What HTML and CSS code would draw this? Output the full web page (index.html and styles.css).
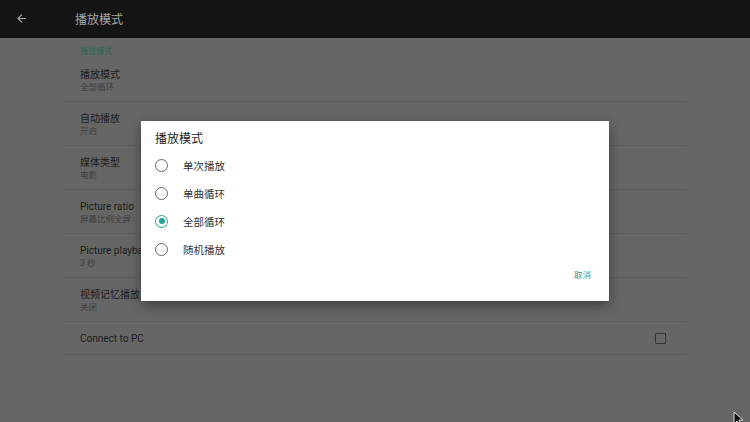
FILE: index.html
```html
<!DOCTYPE html>
<html lang="zh">
<head>
    <meta charset="UTF-8">
    <title>播放模式</title>
    <meta name="viewport" content="width=device-width, initial-scale=1.0">
    <link rel="stylesheet" href="styles.css">
</head>
<body>
    <div class="screen">
        <div class="toolbar">
            <svg class="back" width="13" height="13" viewBox="0 0 24 24">
                <path d="M20 11H7.83l5.59-5.59L12 4l-8 8 8 8 1.41-1.41L7.83 13H20v-2z" fill="#b0b0b0"/>
            </svg>
            <span class="toolbar-title">播放模式</span>
        </div>

        <div class="prefs">
            <div class="category">播放模式</div>
            <div class="pref">
                <div class="pref-title">播放模式</div>
                <div class="pref-sub">全部循环</div>
            </div>
            <div class="pref">
                <div class="pref-title">自动播放</div>
                <div class="pref-sub">开启</div>
            </div>
            <div class="pref">
                <div class="pref-title">媒体类型</div>
                <div class="pref-sub">电影</div>
            </div>
            <div class="pref">
                <div class="pref-title">Picture ratio</div>
                <div class="pref-sub">屏幕比例全屏</div>
            </div>
            <div class="pref">
                <div class="pref-title">Picture playback</div>
                <div class="pref-sub">3 秒</div>
            </div>
            <div class="pref">
                <div class="pref-title">视频记忆播放</div>
                <div class="pref-sub">关闭</div>
            </div>
            <div class="pref pref-check">
                <span class="pref-title">Connect to PC</span>
                <span class="checkbox"></span>
            </div>
        </div>

        <!-- 对话框 -->
        <div class="dialog">
            <div class="dialog-title">播放模式</div>
            <div class="options">
                <div class="option"><span class="radio"></span><span>单次播放</span></div>
                <div class="option"><span class="radio"></span><span>单曲循环</span></div>
                <div class="option"><span class="radio checked"></span><span>全部循环</span></div>
                <div class="option"><span class="radio"></span><span>随机播放</span></div>
            </div>
            <div class="dialog-actions">
                <span class="btn">取消</span>
            </div>
        </div>

        <svg class="cursor" width="12" height="16" viewBox="0 0 12 16">
            <path d="M1 1 L1 13 L4 10 L6.5 15 L8.5 14 L6 9 L10 9 Z" fill="#111" stroke="#ddd" stroke-width="1"/>
        </svg>
    </div>
</body>
</html>
```

FILE: styles.css
```css
* {
    margin: 0;
    padding: 0;
    box-sizing: border-box;
}

body {
    font-family: Roboto, 'Noto Sans CJK SC', sans-serif;
    background: #666;
}

.screen {
    position: relative;
    width: 750px;
    height: 422px;
    overflow: hidden;
    background: #666;
}

.toolbar {
    height: 38px;
    background: #151515;
    border-bottom: 1px solid #111;
    display: flex;
    align-items: center;
}

.back {
    margin-left: 15px;
}

.toolbar-title {
    margin-left: 47px;
    font-size: 12px;
    color: #a8a8a8;
}

.prefs {
    margin-left: 64px;
    width: 622px;
}

.category {
    padding: 8px 16px 0;
    height: 20px;
    line-height: 12px;
    font-size: 8px;
    color: #25685f;
}

.pref {
    padding: 10px 16px 0;
    height: 44px;
    border-bottom: 1px solid #5d5d5d;
}

.pref-title {
    font-size: 10px;
    line-height: 13px;
    color: #1c1c1c;
}

.pref-sub {
    font-size: 8.5px;
    line-height: 12px;
    color: #3e3e3e;
}

.pref-check {
    height: 33px;
    padding: 0 20px 0 16px;
    display: flex;
    align-items: center;
    justify-content: space-between;
}

.checkbox {
    width: 11px;
    height: 11px;
    border: 1.5px solid #333;
    border-radius: 1px;
}

.dialog {
    position: absolute;
    left: 141px;
    top: 121px;
    width: 468px;
    height: 180px;
    background: #fff;
    box-shadow: 0 4px 12px rgba(0, 0, 0, 0.4);
    padding: 10px 18px 0 14px;
    display: flex;
    flex-direction: column;
}

.dialog-title {
    font-size: 12px;
    line-height: 16px;
    color: #222;
}

.options {
    margin-top: 4px;
}

.option {
    height: 28px;
    display: flex;
    align-items: center;
    font-size: 10.5px;
    color: #333;
}

.radio {
    width: 13px;
    height: 13px;
    border: 1.5px solid #666;
    border-radius: 50%;
    margin-right: 15px;
    display: flex;
    align-items: center;
    justify-content: center;
}

.radio.checked {
    border-color: #26a092;
}

.radio.checked::after {
    content: "";
    width: 6px;
    height: 6px;
    border-radius: 50%;
    background: #26a092;
}

.dialog-actions {
    margin-top: auto;
    height: 32px;
    display: flex;
    justify-content: flex-end;
    align-items: flex-start;
}

.btn {
    font-size: 8.5px;
    line-height: 12px;
    color: #3a9b8f;
}

.cursor {
    position: absolute;
    left: 733px;
    top: 411px;
}
```
